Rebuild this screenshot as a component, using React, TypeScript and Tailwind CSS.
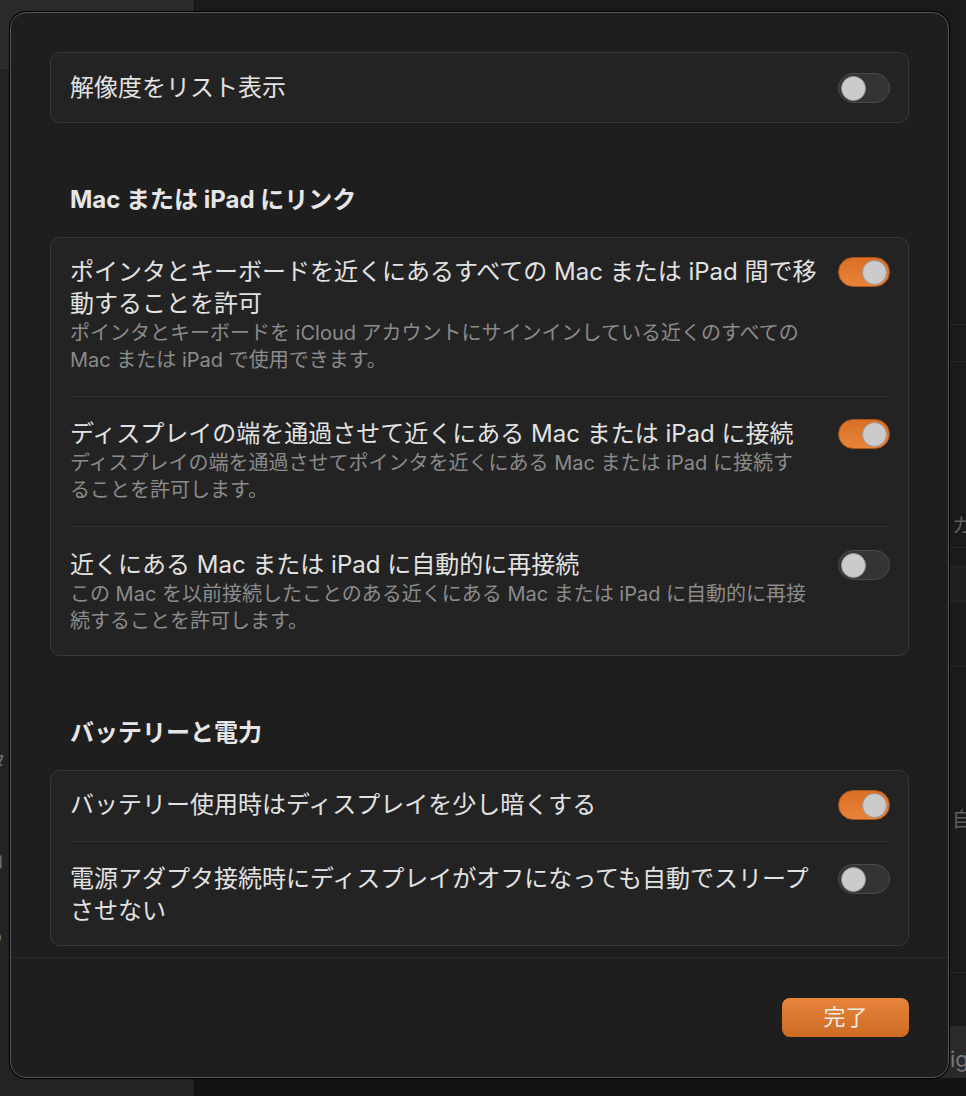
import type { ReactNode } from 'react'

const font = { fontFamily: '"Inter", "Noto Sans CJK JP", sans-serif' }

function Toggle({ on }: { on: boolean }) {
  return (
    <div
      className={
        on
          ? 'w-[52px] h-[30px] shrink-0 mt-px rounded-full border border-[#a95519] bg-gradient-to-b from-[#d96f24] to-[#e8843a] flex items-center justify-end px-[2px]'
          : 'w-[52px] h-[30px] shrink-0 mt-px rounded-full border border-[#4a4a4a] bg-[#343434] flex items-center justify-start px-[2px]'
      }
    >
      <div className="w-[25px] h-[25px] rounded-full bg-[#cbcbcb] border border-[#9a9a9a]" />
    </div>
  )
}

function Row({
  title,
  sub,
  on,
  pad,
}: {
  title: ReactNode
  sub?: ReactNode
  on: boolean
  pad: string
}) {
  return (
    <div className={'flex items-start justify-between pl-[19px] pr-[18px] ' + pad}>
      <div className="flex flex-col whitespace-nowrap">
        <div className="text-[24px] leading-[32px] text-[#e2e2e2]">{title}</div>
        {sub && <div className="text-[20px] leading-[27px] text-[#8b8b8b]">{sub}</div>}
      </div>
      <Toggle on={on} />
    </div>
  )
}

function Divider() {
  return <div className="mx-[19px] border-t border-[#333333]" />
}

function Card({ children }: { children: ReactNode }) {
  return (
    <div className="rounded-[10px] border border-[#383838] bg-[#232323] flex flex-col">
      {children}
    </div>
  )
}

function Heading({ children }: { children: ReactNode }) {
  return (
    <div className="mt-[61px] mb-[21px] pl-[20px] text-[24px] leading-[32px] font-bold text-[#e6e6e6]">
      {children}
    </div>
  )
}

export default function App() {
  return (
    <div className="relative w-[966px] h-[1096px] overflow-hidden bg-[#131313] flex" style={font}>
      {/* 背景: サイドバー */}
      <div className="w-[195px] h-full bg-[#232323] flex flex-col border-r border-[#111]">
        <div className="h-[69px] bg-[#2a2a2a] border-b border-[#333]" />
        <div className="mt-[678px] -ml-[14px] text-[20px] text-[#6f6f6f]">タ</div>
        <div className="mt-[68px] -ml-[14px] text-[20px] text-[#6f6f6f]">ョ</div>
        <div className="mt-[46px] -ml-[10px] text-[20px] text-[#6f6f6f]">o</div>
      </div>

      {/* 背景: メイン */}
      <div className="flex-1 h-[1078px] bg-[#1a1a1a] flex flex-col items-end">
        <div className="w-[40px] h-[325px] border-b border-[#262626]" />
        <div className="w-[40px] h-[37px] border-b border-[#262626]" />
        <div className="w-[40px] h-[186px] border-b border-[#262626] flex items-end justify-end pb-[6px] text-[20px] text-[#5f5f5f]">
          <span className="-mr-[6px]">カ</span>
        </div>
        <div className="w-[40px] h-[19px] border-b border-[#262626]" />
        <div className="w-[40px] h-[35px] bg-[#202020] border-b border-[#262626]" />
        <div className="w-[40px] h-[65px] border-b border-[#262626]" />
        <div className="w-[40px] h-[172px] flex items-end justify-end text-[20px] text-[#5f5f5f] pb-[4px]">
          <span className="-mr-[6px]">自</span>
        </div>
        <div className="w-[40px] h-[134px] border-b border-[#262626]" />
        <div className="w-[40px] h-[53px]" />
        <div className="w-[40px] flex-1 bg-[#2a2a2a] flex items-center text-[22px] text-[#777]">
          <span className="pl-[24px] pt-[14px]">ig</span>
        </div>
      </div>

      {/* ダイアログ */}
      <div className="absolute left-[10px] top-[12px] w-[939px] h-[1066px] rounded-[16px] border border-[#575757] bg-[#1e1e1e] shadow-[0_0_0_1px_#000] flex flex-col overflow-hidden">
        <div className="flex-1 px-[39px] pt-[39px]">
          <Card>
            <Row on={false} pad="pt-[19px] pb-[18px]" title="解像度をリスト表示" />
          </Card>

          <Heading>Mac または iPad にリンク</Heading>
          <Card>
            <Row
              on
              pad="pt-[18px] pb-[22px]"
              title={
                <>
                  ポインタとキーボードを近くにあるすべての Mac または iPad 間で移
                  <br />
                  動することを許可
                </>
              }
              sub={
                <>
                  ポインタとキーボードを iCloud アカウントにサインインしている近くのすべての
                  <br />
                  Mac または iPad で使用できます。
                </>
              }
            />
            <Divider />
            <Row
              on
              pad="pt-[21px] pb-[22px]"
              title="ディスプレイの端を通過させて近くにある Mac または iPad に接続"
              sub={
                <>
                  ディスプレイの端を通過させてポインタを近くにある Mac または iPad に接続す
                  <br />
                  ることを許可します。
                </>
              }
            />
            <Divider />
            <Row
              on={false}
              pad="pt-[22px] pb-[20px]"
              title="近くにある Mac または iPad に自動的に再接続"
              sub={
                <>
                  この Mac を以前接続したことのある近くにある Mac または iPad に自動的に再接
                  <br />
                  続することを許可します。
                </>
              }
            />
          </Card>

          <Heading>バッテリーと電力</Heading>
          <Card>
            <Row on pad="pt-[18px] pb-[20px]" title="バッテリー使用時はディスプレイを少し暗くする" />
            <Divider />
            <Row
              on={false}
              pad="pt-[21px] pb-[18px]"
              title={
                <>
                  電源アダプタ接続時にディスプレイがオフになっても自動でスリープ
                  <br />
                  させない
                </>
              }
            />
          </Card>
        </div>

        <div className="border-t border-[#2c2c2c] pt-[40px] pb-[40px] flex justify-end pr-[39px]">
          <button className="w-[127px] h-[39px] rounded-[8px] bg-gradient-to-b from-[#e8843b] to-[#cd6b24] text-[22px] text-[#f6efe8] flex items-center justify-center">
            完了
          </button>
        </div>
      </div>
    </div>
  )
}
